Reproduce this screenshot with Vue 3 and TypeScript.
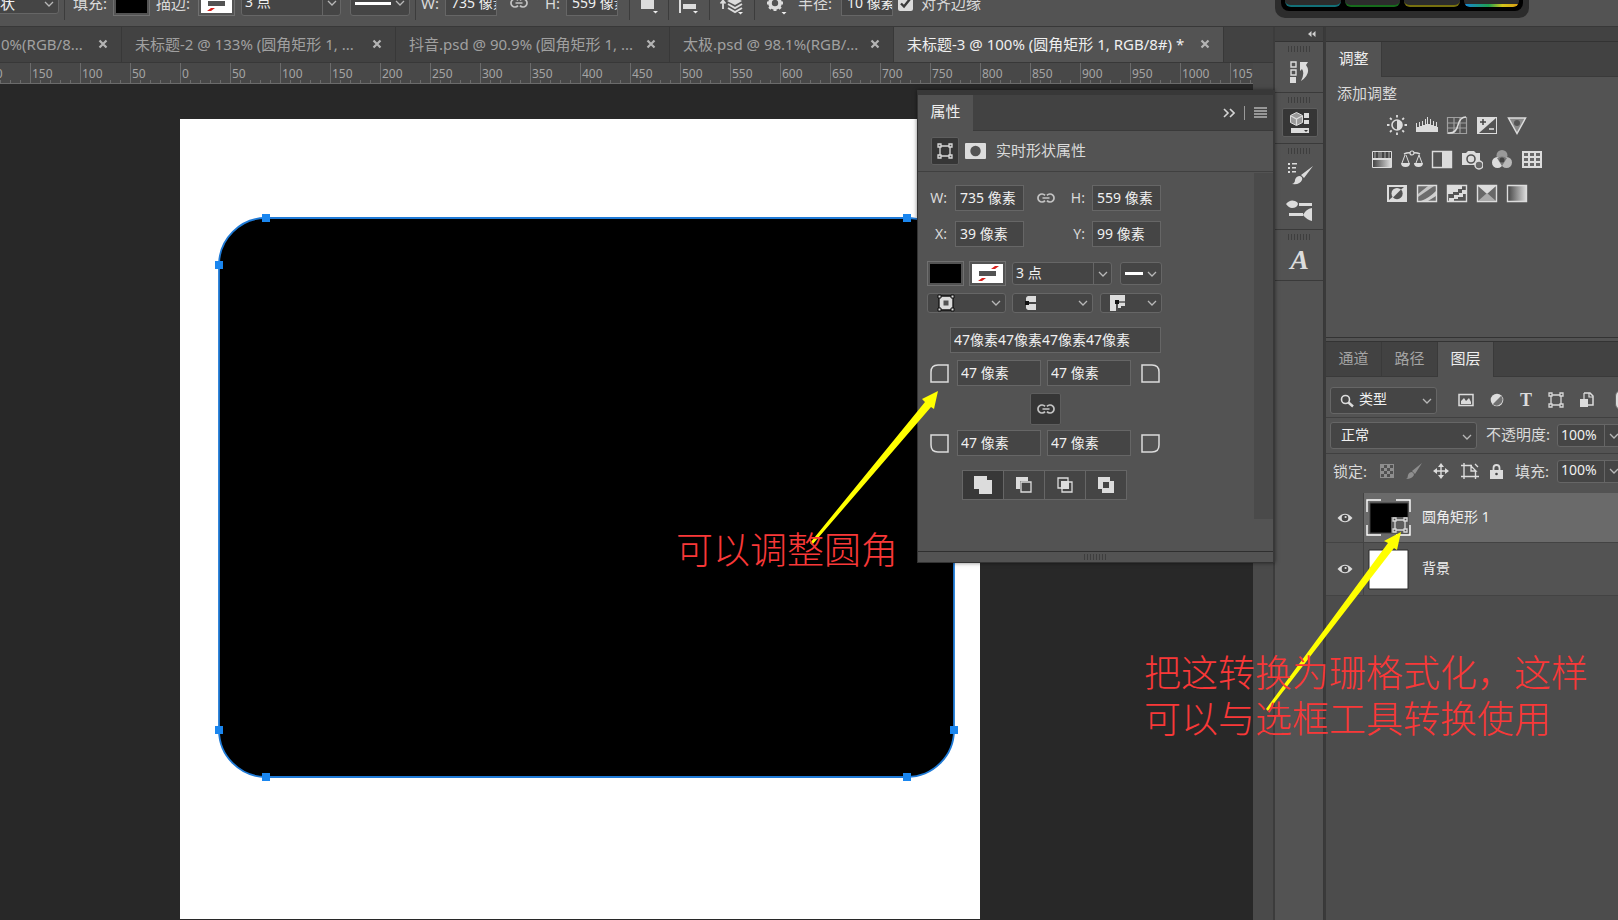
<script setup lang="ts">
import { ref } from 'vue'

interface DocTab {
  title: string
  size: string
  active?: boolean
}

const tabs: DocTab[] = [
  { title: '0%(RGB/8...', size: 'first' },
  { title: '未标题-2 @ 133% (圆角矩形 1, ...', size: 'medium' },
  { title: '抖音.psd @ 90.9% (圆角矩形 1, ...', size: 'medium' },
  { title: '太极.psd @ 98.1%(RGB/...', size: 'small' },
  { title: '未标题-3 @ 100% (圆角矩形 1, RGB/8#) *', size: 'large', active: true },
]

const rulerMarks: number[] = Array.from({ length: 26 }, (_, i) => Math.abs(i * 50 - 200))

const handles: [number, number][] = [
  [86, 99], [727, 99], [39, 146], [774, 146],
  [39, 611], [774, 611], [86, 658], [727, 658],
]

const width = ref('735 像素')
const height = ref('559 像素')
const posX = ref('39 像素')
const posY = ref('99 像素')
const stroke = ref('3 点')
const radius = ref('10 像素')
const allCorners = ref('47像素47像素47像素47像素')
const corners = ref(['47 像素', '47 像素', '47 像素', '47 像素'])
const alignEdges = ref(true)
const opacity = ref('100%')
const fill = ref('100%')
const glow = ['teal', 'green', 'olive', 'rainbow']
</script>

<template>
  <div class="app">
    <svg class="defs" aria-hidden="true">
      <symbol id="i-chev" viewBox="0 0 10 6"><path d="M1 1l4 4 4-4" fill="none" stroke="#b8b8b8" stroke-width="1.3" /></symbol>
      <symbol id="i-link" viewBox="0 0 18 12">
        <path d="M8 8.6A4 4 0 1 1 8 3.4M10 3.4a4 4 0 1 1 0 5.200M5.500 6h7" fill="none" stroke="#c4c4c4" stroke-width="1.700" />
      </symbol>
      <symbol id="i-none" viewBox="0 0 31 19">
        <path d="M0 0h31v19H0z" fill="#fff" />
        <path d="M6 17l4-3h4l-4 3zM19 5l4-3h4l-4 3z" fill="#d8201c" />
        <path d="M7 7h17v5H7z" fill="#535353" />
      </symbol>
      <symbol id="i-shape" viewBox="0 0 16 16">
        <path d="M3 3h10v10H3z" fill="none" stroke="#d8d8d8" stroke-width="1.300" />
        <g fill="#535353" stroke="#d8d8d8" stroke-width="1.300">
          <path d="M1 1h3v3H1zM12 1h3v3h-3zM1 12h3v3H1zM12 12h3v3h-3z" />
        </g>
      </symbol>
      <symbol id="i-close" viewBox="0 0 10 10"><path d="M1.500 1.500l7 7M8.500 1.500l-7 7" stroke="#b4b4b4" stroke-width="2.200" fill="none" /></symbol>
      <symbol id="i-eye" viewBox="0 0 16 10">
        <path d="M.5 5Q8-3.500 15.500 5 8 13.500.5 5z" fill="#dcdcdc" /><circle cx="8" cy="5" r="3.300" fill="#454545" /><circle cx="8.600" cy="4" r="1.100" fill="#dcdcdc" />
      </symbol>
    </svg>

    <header class="options">
      <div class="options-row">
        <div class="select opt-kind">
          <select aria-label="工具模式"><option>形状</option></select>
          <svg class="chev"><use href="#i-chev" /></svg>
        </div>
        <i class="sep sep-a"></i>
        <span class="opt-label lab-fill">填充:</span>
        <button class="swatch" aria-label="填充颜色"><span class="black"></span></button>
        <span class="opt-label lab-stroke">描边:</span>
        <button class="swatch" aria-label="描边颜色"><svg class="none"><use href="#i-none" /></svg></button>
        <div class="combo opt-combo">
          <input v-model="stroke" aria-label="描边宽度" />
          <button aria-label="描边宽度选项"><svg class="chev-in"><use href="#i-chev" /></svg></button>
        </div>
        <button class="line-select opt-line" aria-label="描边类型"><span></span><svg class="chev-in"><use href="#i-chev" /></svg></button>
        <i class="sep sep-b"></i>
        <label class="opt-label lab-w" for="o-w">W:</label>
        <input id="o-w" v-model="width" class="field opt-field" />
        <svg class="link opt-link"><use href="#i-link" /></svg>
        <label class="opt-label lab-h" for="o-h">H:</label>
        <input id="o-h" v-model="height" class="field opt-field" />
        <div class="tool-set">
          <i class="sep"></i>
          <button class="tool" aria-label="路径操作">
            <svg width="20" height="28"><path d="M2 6h13v14H2z" fill="#dcdcdc" /><path d="M14 22h5l-2.500 2.500z" fill="#eee" /></svg>
          </button>
          <i class="sep"></i>
          <button class="tool" aria-label="路径对齐方式">
            <svg width="22" height="28"><path d="M1 2h2v22H1zM5 6h8v5H5zM5 15h13v5H5z" fill="#dcdcdc" /><path d="M15 22h5l-2.500 2.500z" fill="#eee" /></svg>
          </button>
          <i class="sep"></i>
          <button class="tool" aria-label="路径排列方式">
            <svg width="26" height="28"><path d="M4 20v-8M1.500 14.500L4 11.500l2.500 3" stroke="#dcdcdc" stroke-width="1.800" fill="none" /><path d="M8 12l8-4 7 4-7 4z" fill="#dcdcdc" /><path d="M9 15l7 4 7-4M9 19l7 4 7-4" fill="none" stroke="#dcdcdc" stroke-width="2" /><path d="M19 23h5l-2.500 2.500z" fill="#eee" /></svg>
          </button>
          <i class="sep"></i>
        </div>
        <button class="gear" aria-label="设置">
          <svg width="22" height="28"><circle cx="9" cy="14" r="5" fill="none" stroke="#dcdcdc" stroke-width="3.600" /><path d="M9 6v3M9 19v3M1 14h3M14 14h3M3.300 8.300l2 2M12.700 17.700l2 2M14.700 8.300l-2 2M5.300 17.700l-2 2" stroke="#dcdcdc" stroke-width="3" /><path d="M15.500 23h5L18 25.500z" fill="#eee" /></svg>
        </button>
        <label class="opt-label lab-r" for="o-r">半径:</label>
        <input id="o-r" v-model="radius" class="field opt-field" />
        <label class="check"><input v-model="alignEdges" type="checkbox" />对齐边缘</label>
      </div>
    </header>

    <div class="widget" aria-hidden="true"><div class="widget-in"><span v-for="g in glow" :key="g" :class="g"></span></div></div>

    <div class="work">
      <main class="document">
        <nav class="tabs">
          <div v-for="t in tabs" :key="t.title" class="tab" :class="[t.size, { active: t.active }]">
            <button class="tab-title">{{ t.title }}</button>
            <button class="tab-close" aria-label="关闭"><svg width="10" height="10"><use href="#i-close" /></svg></button>
          </div>
        </nav>
        <div class="stage">
          <div class="view">
            <div class="ruler"><div class="marks"><span v-for="(m, i) in rulerMarks" :key="i">{{ m }}</span></div></div>
            <div class="canvas">
              <svg class="artboard" viewBox="0 0 800 800">
                <rect width="800" height="800" fill="#fff" />
                <rect x="39" y="99" width="735" height="559" rx="47" stroke="#1f7ad6" stroke-width="1.800" />
                <rect v-for="([x, y], i) in handles" :key="i" :x="x - 4" :y="y - 4" width="8" height="8" fill="#1a86ef" />
              </svg>
            </div>
          </div>
          <div class="gutter"></div>

          <section class="props">
            <div class="props-tabs">
              <button class="ptab">属性</button>
              <span class="fill"></span>
              <button class="plain" aria-label="折叠"><svg width="12" height="10"><path d="M1 1l4 4-4 4M7 1l4 4-4 4" fill="none" stroke="#d4d4d4" stroke-width="1.600" /></svg></button>
              <i class="bar"></i>
              <button class="plain" aria-label="面板菜单"><svg width="13" height="11"><path d="M0 1h13M0 4h13M0 7h13M0 10h13" stroke="#b4b4b4" stroke-width="1.500" /></svg></button>
            </div>
            <div class="props-head">
              <button class="mode" aria-label="形状"><svg width="16" height="16"><use href="#i-shape" /></svg></button>
              <svg width="21" height="16"><rect width="21" height="16" rx="1" fill="#dcdcdc" /><circle cx="10.500" cy="8" r="5.200" fill="#535353" /></svg>
              <span>实时形状属性</span>
            </div>
            <div class="props-body">
              <div class="props-form">
                <div class="row">
                  <label class="wl" for="p-w">W:</label><input id="p-w" v-model="width" class="field" />
                  <span class="link-cell"><svg class="link"><use href="#i-link" /></svg></span>
                  <label class="hl" for="p-h">H:</label><input id="p-h" v-model="height" class="field" />
                </div>
                <div class="row gap-m">
                  <label class="wl" for="p-x">X:</label><input id="p-x" v-model="posX" class="field" />
                  <span class="link-cell"></span>
                  <label class="hl" for="p-y">Y:</label><input id="p-y" v-model="posY" class="field" />
                </div>
                <div class="row gap-l indent">
                  <button class="swatch" aria-label="填充颜色"><span class="black"></span></button>
                  <button class="swatch second" aria-label="描边颜色"><svg class="none"><use href="#i-none" /></svg></button>
                  <div class="combo">
                    <input v-model="stroke" aria-label="描边宽度" />
                    <button aria-label="描边宽度选项"><svg class="chev-in"><use href="#i-chev" /></svg></button>
                  </div>
                  <button class="line-select" aria-label="描边类型"><span></span><svg class="chev-in"><use href="#i-chev" /></svg></button>
                </div>
                <div class="row gap-s indent drops">
                  <button class="drop d1" aria-label="描边对齐">
                    <svg width="18" height="18"><path d="M2 2h14v14H2z" fill="#dcdcdc" stroke="#111" stroke-width="1.300" /><path d="M6.500 6.500h5v5h-5z" fill="#535353" /><path d="M1 1h3v3H1zM14 1h3v3h-3zM1 14h3v3H1zM14 14h3v3h-3z" fill="#ddd" stroke="#111" /></svg>
                    <svg class="chev-in"><use href="#i-chev" /></svg>
                  </button>
                  <button class="drop d2" aria-label="描边端点">
                    <svg width="18" height="16"><path d="M7 1h8v6H8v2h7v6H7a3 3 0 0 1-2-2V3a3 3 0 0 1 2-2z" fill="#dcdcdc" /><path d="M4 6h4v4H4z" fill="#111" /></svg>
                    <svg class="chev-in"><use href="#i-chev" /></svg>
                  </button>
                  <button class="drop d3" aria-label="描边合并">
                    <svg width="17" height="16"><path d="M1 0h15v11h-4v2H9v3H1z" fill="#dcdcdc" /><path d="M6 5h4v4H6zM7.300 8h1.400v8H7.300zM9 6.500h7v1H9z" fill="#111" /></svg>
                    <svg class="chev-in"><use href="#i-chev" /></svg>
                  </button>
                </div>
                <div class="row gap-l all"><input v-model="allCorners" class="field" aria-label="角半径" /></div>
                <div class="row gap-s corner-row">
                  <svg width="19" height="19"><path d="M18 18V1H8Q1 1 1 8v10z" class="corner" /></svg>
                  <input v-model="corners[0]" class="field" aria-label="左上角半径" />
                  <input v-model="corners[1]" class="field" aria-label="右上角半径" />
                  <svg width="19" height="19"><path d="M1 18V1h10q7 0 7 7v10z" class="corner" /></svg>
                </div>
                <div class="row gap-s lock-row"><button class="lock-link" aria-label="链接角半径"><svg class="link"><use href="#i-link" /></svg></button></div>
                <div class="row gap-xs corner-row">
                  <svg width="19" height="19"><path d="M1 1h17v17H8q-7 0-7-7z" class="corner" /></svg>
                  <input v-model="corners[2]" class="field" aria-label="左下角半径" />
                  <input v-model="corners[3]" class="field" aria-label="右下角半径" />
                  <svg width="19" height="19"><path d="M1 1h17v10q0 7-7 7H1z" class="corner" /></svg>
                </div>
                <div class="row gap-l bool">
                  <button class="on" aria-label="合并形状"><svg width="18" height="18"><path d="M0 0h13v4h5v14H5v-5H0z" fill="#dcdcdc" /></svg></button>
                  <button aria-label="减去顶层"><svg width="16" height="16"><path d="M0 0h12v4H4v8H0z" fill="#dcdcdc" /><path d="M5 5h10v10H5z" class="thin" /></svg></button>
                  <button aria-label="交叉形状"><svg width="16" height="16"><path d="M1 1h10v10H1zM5 5h10v10H5z" class="thin" /><path d="M4 4h8v8H4z" fill="#dcdcdc" /></svg></button>
                  <button aria-label="排除重叠"><svg width="16" height="16"><path d="M0 0h12v4h4v12H4v-4H0zM5 5v6h6V5z" fill="#dcdcdc" fill-rule="evenodd" /></svg></button>
                </div>
              </div>
              <div class="track"></div>
            </div>
            <div class="props-foot"><i class="grip"></i></div>
          </section>
        </div>
      </main>

      <aside class="strip">
        <div class="strip-top"><svg width="8" height="6"><path d="M3.500 0v6L0 3zM7.500 0v6L4 3z" fill="#cfcfcf" /></svg></div>
        <div class="strip-group">
          <i class="grip"></i>
          <button aria-label="历史记录"><svg width="20" height="24"><path d="M1 2h5v5H1zM1 10h5v5H1z" fill="none" stroke="#dcdcdc" stroke-width="1.400" /><path d="M0 17h6v6H0z" fill="#dcdcdc" /><path d="M10 2h8l-2 3q6 8-5 16 4-8 1-12l-2 2z" fill="#dcdcdc" /></svg></button>
        </div>
        <div class="strip-group">
          <i class="grip"></i>
          <button class="on" aria-label="属性"><svg width="20" height="22"><path d="M6.500.5l6 3v7l-6 3-6-3v-7z" fill="#9a9a9a" stroke="#dcdcdc" /><path d="M1 4l5.500 3L12 4M6.500 7v6" fill="none" stroke="#dcdcdc" stroke-width="1.200" /><path d="M14 1h5v5h-5zM14 8h5v4h-5zM1 16h18v5H1z" fill="#dcdcdc" /><path d="M14 18h4l-2 2z" fill="#333" /></svg></button>
        </div>
        <div class="strip-group two">
          <i class="grip"></i>
          <button aria-label="画笔设置"><svg width="26" height="24"><path d="M1 1h2v2H1zM5 1h5v1.500H5zM1 5h2v2H1zM5 5h4v1.500H5zM1 9h2v2H1zM5 9h4v1.500H5z" fill="#dcdcdc" /><path d="M26 4l-9 12-3-3zM5 22q3-1 3-4 1-4 5-4 3 1 2 4-2 5-10 4z" fill="#dcdcdc" /></svg></button>
          <button aria-label="画笔"><svg width="27" height="22"><path d="M0 5q4-5 9-3 3 1 3 3-1 4-6 4-3 0-6-4zM13 4h13v3H13zM3 14h14v3H3zM26 9v13q-5-1-9-6 3-6 9-7z" fill="#dcdcdc" /></svg></button>
        </div>
        <div class="strip-group">
          <i class="grip"></i>
          <button class="glyph" aria-label="字形">A</button>
        </div>
      </aside>

      <aside class="side">
        <div class="side-top"></div>
        <section class="adjust">
          <div class="side-tabs"><button class="active">调整</button></div>
          <p>添加调整</p>
          <div class="adj-row">
            <svg viewBox="0 0 22 22"><circle cx="11" cy="11" r="5" fill="none" stroke="#dcdcdc" stroke-width="1.600" /><path d="M11 6a5 5 0 0 1 0 10z" fill="#dcdcdc" /><path d="M11 1v2.500M11 18.500V21M1 11h2.500M18.500 11H21M4 4l1.700 1.700M16.300 16.300L18 18M18 4l-1.700 1.700M5.700 16.300L4 18" stroke="#dcdcdc" stroke-width="1.800" /></svg>
            <svg viewBox="0 0 22 22"><path d="M0 18V9h1v4h2V8h1v4h2V7h1v4h2V5h1v5h1V3h1v7h2V5h1v6h2V7h1v5h2V8h1v5h1V8h1v10z" fill="#dcdcdc" /></svg>
            <svg viewBox="0 0 22 22"><path d="M1.500 3.500h19v16h-19zM8 3v16M14 3v16M1 9h20M1 14h20" fill="none" stroke="#a0a0a0" stroke-width="1.200" /><path d="M2 19q8 1 10-8 2-8 8-8" fill="none" stroke="#dcdcdc" stroke-width="1.500" /></svg>
            <svg viewBox="0 0 22 22"><path d="M1 3h20v17H1z" fill="#dcdcdc" /><path d="M20 4v15H3z" fill="#535353" /><path d="M4 8h6M7 5v6" stroke="#444" stroke-width="1.500" /><path d="M13 15h5" stroke="#dcdcdc" stroke-width="1.600" /></svg>
            <svg viewBox="0 0 22 22"><path d="M2.500 4h17L11 19.500z" fill="#8a8a8a" stroke="#dcdcdc" stroke-width="1.500" /><circle cx="11" cy="9" r="3" fill="#555" /></svg>
          </div>
          <div class="adj-row">
            <svg viewBox="0 0 22 22"><path d="M1.500 3.500h19v16h-19z" fill="#444" stroke="#dcdcdc" /><path d="M4 4v6M8 4v6M10 4v6M14 4v6M18 4v6" stroke="#aaa" /><path d="M2 11h19" stroke="#dcdcdc" stroke-width="2" /><path d="M2 12h18v7H2z" fill="url(#g-ramp)" /></svg>
            <svg viewBox="0 0 22 22"><path d="M3 6q4-2 8-1 4-1 8 1" fill="none" stroke="#dcdcdc" stroke-width="1.500" /><circle cx="11" cy="5" r="2" fill="#535353" stroke="#dcdcdc" stroke-width="1.200" /><path d="M4 7L1 15M5 7l3 8M18 7l-3 8M18 7l3 8" stroke="#dcdcdc" /><path d="M0 15h9q0 4-4.500 4T0 15zM13 15h9q0 4-4.500 4T13 15z" fill="#dcdcdc" /></svg>
            <svg viewBox="0 0 22 22"><path d="M1.500 3.500h19v16h-19z" fill="none" stroke="#dcdcdc" stroke-width="1.400" /><path d="M11 3h10v17H11z" fill="#dcdcdc" /></svg>
            <svg viewBox="0 0 22 22"><path d="M1 5h4l2-2h6l2 2h4v12H1z" fill="#dcdcdc" /><circle cx="10" cy="11" r="4" fill="#dcdcdc" stroke="#535353" stroke-width="1.600" /><circle cx="18" cy="17" r="4" fill="#666" stroke="#dcdcdc" stroke-width="1.500" /></svg>
            <svg viewBox="0 0 22 22"><circle cx="11" cy="7.500" r="5.500" fill="#999" /><circle cx="6.500" cy="14.500" r="5.500" fill="#dcdcdc" /><circle cx="15.500" cy="14.500" r="5.500" fill="#b8b8b8" /><path d="M6 10q5-3 10 0l-5 8z" fill="#777" /><circle cx="11" cy="12" r="2.500" fill="#444" /></svg>
            <svg viewBox="0 0 22 22"><path d="M1 3h20v17H1z" fill="#dcdcdc" /><path d="M3 5h4v3H3zM9 5h4v3H9zM15 5h4v3h-4zM3 10h4v3H3zM9 10h4v3H9zM15 10h4v3h-4zM3 15h4v3H3zM9 15h4v3H9zM15 15h4v3h-4z" fill="#666" /></svg>
          </div>
          <div class="adj-row">
            <svg viewBox="0 0 22 22"><path d="M1 3h20v17H1z" fill="#dcdcdc" /><path d="M3 5h15L3 18z" fill="#535353" /><circle cx="11" cy="11.500" r="5.500" fill="#dcdcdc" /><path d="M7 15.500a5.500 5.500 0 0 0 8-8z" fill="#535353" /></svg>
            <svg viewBox="0 0 22 22"><path d="M1.500 3.500h19v16h-19z" fill="#6c6c6c" stroke="#dcdcdc" stroke-width="1.400" /><path d="M2 12L12 4h6L2 15z" fill="#c4c4c4" /><path d="M5 19q8-3 15-10v5l-8 5z" fill="#d0d0d0" /></svg>
            <svg viewBox="0 0 22 22"><path d="M1.500 3.500h19v16h-19z" fill="#535353" stroke="#dcdcdc" stroke-width="1.400" /><path d="M2 4h14v3h-4v3H7v2H2zM20 8v4h-3v3h-5v2H8v2H3v-3h5v-3h5v-2h3V8z" fill="#dcdcdc" /></svg>
            <svg viewBox="0 0 22 22"><path d="M1.500 3.500h19v16h-19z" fill="#686868" stroke="#dcdcdc" stroke-width="1.400" /><path d="M2 4h18l-9 8z" fill="#dcdcdc" /><path d="M2 19h18l-9-8z" fill="#aaa" /></svg>
            <svg viewBox="0 0 22 22"><defs><linearGradient id="g-ramp"><stop stop-color="#444" /><stop offset="1" stop-color="#ddd" /></linearGradient></defs><path d="M1.500 3.500h19v16h-19z" fill="url(#g-ramp)" stroke="#dcdcdc" stroke-width="1.400" /></svg>
          </div>
        </section>

        <section class="layers">
          <div class="side-tabs"><button>通道</button><button>路径</button><button class="active">图层</button></div>
          <div class="filter-row">
            <div class="select kind">
              <svg class="mag" width="14" height="14"><circle cx="5.500" cy="5.500" r="4" fill="none" stroke="#dcdcdc" stroke-width="1.600" /><path d="M8.500 8.500l4.500 4" stroke="#dcdcdc" stroke-width="2.400" /></svg>
              <select aria-label="图层过滤"><option>类型</option></select>
              <svg class="chev"><use href="#i-chev" /></svg>
            </div>
            <div class="filters">
              <button aria-label="像素图层"><svg width="16" height="14"><path d="M1 1.500h14v11H1z" fill="none" stroke="#dcdcdc" stroke-width="1.500" /><path d="M3 11V8l3-3 2 3 3-3 2 4v2z" fill="#dcdcdc" /></svg></button>
              <button aria-label="调整图层"><svg width="14" height="14"><circle cx="7" cy="7" r="6.300" fill="#dcdcdc" /><path d="M2.800 11.200A6 6 0 0 0 11.200 2.800z" fill="#707070" /></svg></button>
              <button class="type" aria-label="文字图层">T</button>
              <button aria-label="形状图层"><svg width="16" height="16"><use href="#i-shape" /></svg></button>
              <button aria-label="智能对象"><svg width="14" height="16"><path d="M4 1h6l3 3v9H8" fill="none" stroke="#dcdcdc" stroke-width="1.500" /><path d="M9 1v4h4M4 1v6" fill="none" stroke="#dcdcdc" stroke-width="1.200" /><path d="M0 7h8v8H0z" fill="#dcdcdc" /></svg></button>
            </div>
            <button class="toggle" aria-label="过滤开关"></button>
          </div>
          <div class="blend-row">
            <div class="select blend">
              <select aria-label="混合模式"><option>正常</option></select>
              <svg class="chev"><use href="#i-chev" /></svg>
            </div>
            <label for="l-op">不透明度:</label>
            <div class="combo pct"><input id="l-op" v-model="opacity" /><button aria-label="不透明度选项"><svg class="chev-in"><use href="#i-chev" /></svg></button></div>
          </div>
          <div class="lock-bar">
            <span class="lock-label">锁定:</span>
            <div class="locks">
              <button aria-label="锁定透明像素"><svg width="14" height="14"><path d="M0 0h14v14H0z" fill="#8e8e8e" /><path d="M4 1h3v3H4zM10 1h3v3h-3zM1 4h3v3H1zM7 4h3v3H7zM4 7h3v3H4zM10 7h3v3h-3zM1 10h3v3H1zM7 10h3v3H7z" fill="#505050" /></svg></button>
              <button aria-label="锁定图像像素"><svg width="16" height="16"><path d="M16 0L9 11 6 8zM0 16q2-1 2-4 1-3 4-3 2 1 2 3-2 4-8 4z" fill="#8e8e8e" /></svg></button>
              <button aria-label="锁定位置"><svg width="16" height="16"><path d="M8 2v12M2 8h12" stroke="#dcdcdc" stroke-width="1.400" /><path d="M8 0l3 4H5zM8 16l3-4H5zM0 8l4-3v6zM16 8l-4-3v6z" fill="#dcdcdc" /></svg></button>
              <button aria-label="锁定画板"><svg width="18" height="16"><path d="M0 2.500h11M3 0v16M0 13.500h18M14.500 8v8" fill="none" stroke="#dcdcdc" stroke-width="1.400" /><path d="M10 3l5 5h-5zM14 1l3 3" fill="none" stroke="#dcdcdc" stroke-width="1.300" /></svg></button>
              <button aria-label="锁定全部"><svg width="13" height="15"><path d="M3.500 7V4a3 3 0 0 1 6 0v3" fill="none" stroke="#dcdcdc" stroke-width="1.800" /><path d="M0 6h13v9H0z" fill="#dcdcdc" /><circle cx="6.500" cy="10" r="1.300" fill="#444" /></svg></button>
            </div>
            <label for="l-fill">填充:</label>
            <div class="combo pct"><input id="l-fill" v-model="fill" /><button aria-label="填充选项"><svg class="chev-in"><use href="#i-chev" /></svg></button></div>
          </div>
          <ul class="layer-list">
            <li class="selected">
              <button class="eye" aria-label="可见性"><svg width="16" height="10"><use href="#i-eye" /></svg></button>
              <div class="layer">
                <svg class="thumb" width="45" height="37"><path d="M4 4h38v30H4z" fill="#000" stroke="#404040" /><path d="M25 18h17v16H25z" fill="#5d5d5d" /><svg x="26" y="18" width="16" height="16"><use href="#i-shape" /></svg><path d="M1 13V1h14M30 1h14v12M44 26v10H30M15 36H1V26" fill="none" stroke="#fff" stroke-width="1.400" /></svg>
                <span>圆角矩形 1</span>
              </div>
            </li>
            <li>
              <button class="eye" aria-label="可见性"><svg width="16" height="10"><use href="#i-eye" /></svg></button>
              <div class="layer">
                <svg class="thumb" width="45" height="41"><path d="M3 1h39v39H3z" fill="#fff" stroke="#2a2a2a" /></svg>
                <span>背景</span>
              </div>
            </li>
          </ul>
        </section>
      </aside>
    </div>

    <div class="notes">
      <svg width="960" height="760" fill="#ff0">
        <path d="M152 543L267 402l-3-3 16-8-4 18-3-2L154 545z" />
        <path d="M608 709L730 543l-4-2 17-9-4 18-3-2L610 711z" />
      </svg>
      <p class="note one">可以调整圆角</p>
      <p class="note two">把这转换为珊格式化，这样<br />可以与选框工具转换使用</p>
    </div>
  </div>
</template>

<style>
body { margin: 0; background: #535353; overflow: hidden; }
</style>

<style scoped>
* { box-sizing: border-box; }
.app {
  position: relative; display: flex; flex-direction: column; height: 100vh; overflow: hidden;
  background: #535353; color: #dadada;
  font: 14px/20px "Noto Sans", "Noto Sans CJK SC", sans-serif;
}
.defs { position: absolute; width: 0; height: 0; }
button, input, select { font: inherit; color: inherit; margin: 0; }
button { padding: 0; border: 0; background: none; display: flex; align-items: center; justify-content: center; flex: none; }
svg { display: block; flex: none; }
i { display: block; flex: none; }
.field, .combo, .select, .line-select, .drop { background: #454545; border: 1px solid #666; color: #f0f0f0; }
.field { height: 26px; width: 69px; padding: 0 4px 2px; border-radius: 0; min-width: 0; flex: none; }
.combo { display: flex; border-radius: 3px; height: 23px; width: 100px; flex: none; overflow: hidden; }
.combo input { flex: 1; min-width: 0; border: 0; background: none; padding: 0 3px 2px; }
.combo button { width: 18px; border-left: 1px solid #666; }
.chev-in { width: 10px; height: 6px; }
.select { position: relative; border-radius: 3px; flex: none; }
.select select { width: 100%; height: 100%; border: 0; background: none; appearance: none; display: block; padding-bottom: 2px; }
.chev { position: absolute; right: 4px; top: 50%; width: 10px; height: 6px; margin-top: -2px; pointer-events: none; }
.line-select { border-radius: 3px; height: 23px; width: 42px; justify-content: space-between; padding: 0 4px; }
.line-select span { width: 18px; height: 3px; background: #fff; }
.swatch { width: 37px; height: 25px; border: 1px solid #707070; }
.black, .none { width: 31px; height: 19px; }
.black { background: #000; }
.link { width: 18px; height: 12px; }

.options { height: 27px; overflow: hidden; border-bottom: 1px solid #383838; flex: none; }
.options-row { height: 46px; margin-top: -20px; display: flex; align-items: center; }
.opt-label { font-size: 15px; flex: none; white-space: nowrap; }
.opt-kind { width: 75px; height: 22px; margin-left: -16px; }
.opt-kind select { padding-left: 0; font-size: 15px; }
.sep { width: 1px; height: 34px; background: #3c3c3c; }
.sep-a { margin: 0 8px 0 5px; }
.lab-fill { width: 40px; }
.lab-stroke { width: 48px; padding-left: 6px; }
.opt-combo { height: 26px; margin-left: 6px; }
.opt-line { width: 60px; height: 26px; margin-left: 9px; }
.opt-line span { width: 36px; }
.sep-b { margin: 0 5px; }
.lab-w { width: 24px; }
.lab-h { width: 21px; }
.opt-field { width: 52px; padding: 0 0 2px 5px; }
.opt-link { margin: 0 17px 0 13px; }
.tool-set { display: flex; align-items: center; margin-left: 11px; width: 126px; justify-content: space-between; }
.gear { margin: 0 10px 0 11px; }
.lab-r { width: 43px; }
.check { display: flex; align-items: center; gap: 8px; margin-left: 5px; font-size: 15px; white-space: nowrap; }
.check input { width: 15px; height: 15px; accent-color: #dcdcdc; }

.widget { position: absolute; right: 89px; top: 0; width: 254px; height: 18px; background: #2c2c2c; border-radius: 0 0 10px 10px; padding: 0 6px 7px; }
.widget-in { height: 11px; background: #000; border-radius: 0 0 8px 8px; padding: 0 4px 4px; display: flex; gap: 4px; }
.widget-in span { flex: 1; background: #2c2c2c; border-bottom: 2px solid; border-radius: 0 0 6px 6px; }
.widget-in .teal { border-color: #137078; }
.widget-in .green { border-color: #176b1c; }
.widget-in .olive { border-color: #77700f; }
.widget-in .rainbow { border: 0; background: linear-gradient(#2c2c2c, #2c2c2c) top / 100% 4px no-repeat, linear-gradient(90deg, #1787d8, #20a050 45%, #d3c51a 70%, #d99b13); }

.work { flex: 1; min-height: 0; display: grid; grid-template-columns: minmax(0, 1fr) 49px 294px; }
.document { display: flex; flex-direction: column; min-width: 0; min-height: 0; border-right: 2px solid #3c3c3c; }
.tabs { height: 36px; display: flex; background: #424242; border-bottom: 1px solid #383838; flex: none; }
.tab { display: flex; align-items: center; padding: 0 13px 2px; border-right: 1px solid #383838; color: #a0a0a0; flex: none; font-size: 15px; }
.tab-title { flex: 1; justify-content: flex-start; white-space: nowrap; }
.first { width: 122px; padding-left: 1px; }
.medium { width: 274px; }
.small { width: 224px; }
.large { width: 330px; }
.tab.active { background: #535353; color: #efefef; }
.stage { position: relative; flex: 1; min-height: 0; display: flex; }
.view { flex: 1; min-width: 0; display: flex; flex-direction: column; }
.ruler { height: 21px; background: #484848; border-bottom: 1px solid #6b6b6b; overflow: hidden; flex: none; }
.marks { display: flex; height: 100%; margin-left: -20px; }
.marks span { width: 50px; flex: none; border-left: 1px solid #6b6b6b; padding-left: 1px; font-size: 12px; line-height: 22px; color: #a4a4a4; background: repeating-linear-gradient(90deg, transparent 0 9px, #6b6b6b 9px 10px) left bottom / 100% 3px no-repeat; }
.canvas { position: relative; flex: 1; background: #282828; overflow: hidden; }
.artboard { position: absolute; left: 180px; top: 35px; width: 800px; height: 800px; }
.gutter { width: 20px; background: #4a4a4a; }

.props { position: absolute; right: -2px; top: 27px; width: 358px; background: #535353; border-top: 5px solid #383838; border-left: 1px solid #333; border-right: 2px solid #383838; box-shadow: 0 0 4px rgba(0, 0, 0, .5); border-bottom: 1px solid #333; }
.props-tabs { height: 36px; background: #424242; border-bottom: 1px solid #3a3a3a; display: flex; align-items: center; padding-right: 6px; gap: 9px; }
.ptab { height: 36px; width: 55px; background: #535353; color: #efefef; font-size: 15px; padding-bottom: 3px; }
.fill { flex: 1; }
.bar { width: 1px; height: 14px; background: #999; }
.props-head { height: 41px; border-bottom: 1px solid #404040; display: flex; align-items: center; padding-left: 13px; gap: 6px; font-size: 15px; }
.props-head span { margin-left: 4px; padding-bottom: 2px; }
.mode { width: 28px; height: 28px; background: #363636; border: 1px solid #5e5e5e; border-radius: 2px; }
.props-body { display: flex; height: 379px; }
.props-form { flex: 1; padding-top: 13px; }
.track { width: 19px; background: #4a4a4a; margin: 1px 0 32px; }
.row { display: flex; align-items: center; }
.gap-xs { margin-top: 5px; }
.gap-s { margin-top: 7px; }
.gap-m { margin-top: 10px; }
.gap-l { margin-top: 14px; }
.indent { padding-left: 9px; }
.wl { width: 29px; margin-right: 8px; text-align: right; }
.hl { width: 17px; margin-right: 7px; text-align: right; }
.link-cell { width: 44px; display: flex; justify-content: center; }
.second { margin: 0 6px 0 5px; }
.row .line-select { margin-left: 8px; }
.drop { height: 20px; border-radius: 3px; justify-content: space-between; padding: 0 4px 0 8px; }
.d1 { width: 79px; padding-left: 9px; }
.d2 { width: 81px; margin: 0 7px 0 6px; }
.d3 { width: 62px; }
.all { padding-left: 32px; }
.all .field { width: 211px; padding: 0 3px 2px; }
.corner-row { padding-left: 12px; }
.corner-row .field { width: 84px; padding: 0 3px 2px; }
.corner-row .field:nth-child(2) { margin: 0 6px 0 8px; }
.corner-row .field:nth-child(3) { margin-right: 10px; }
.corner { fill: none; stroke: #dcdcdc; stroke-width: 1.500; }
.thin { fill: none; stroke: #dcdcdc; stroke-width: 1.300; }
.lock-row { padding-left: 112px; }
.lock-link { width: 31px; height: 32px; background: #363636; border: 1px solid #5e5e5e; border-radius: 2px; }
.bool { padding-left: 44px; }
.bool button { width: 42px; height: 30px; background: #454545; border: 1px solid #666; margin-right: -1px; }
.bool .on { background: #383838; }
.props-foot { height: 11px; border-top: 1px solid #2f2f2f; display: flex; justify-content: center; padding-top: 2px; }
.grip { width: 24px; height: 6px; background: repeating-linear-gradient(90deg, #3e3e3e 0 1px, transparent 1px 3px); }

.strip { background: #535353; display: flex; flex-direction: column; border-right: 1px solid #383838; }
.strip-top { height: 15px; background: #424242; border-bottom: 1px solid #333; display: flex; align-items: center; justify-content: flex-end; padding-right: 7px; }
.strip-group { height: 51px; border-bottom: 1px solid #3a3a3a; display: flex; flex-direction: column; align-items: center; padding: 4px 0 0 1px; }
.strip-group button { width: 36px; height: 29px; margin-top: 5px; }
.strip-group .on { background: #363636; border: 1px solid #5e5e5e; border-radius: 2px; }
.strip-group.two { height: 86px; }
.two button + button { margin-top: 7px; }
.strip-group .glyph { font: italic bold 28px/29px "Liberation Serif", serif; color: #dcdcdc; }

.side { display: flex; flex-direction: column; min-width: 0; min-height: 0; border-left: 2px solid #3a3a3a; overflow: hidden; }
.side-top { height: 15px; background: #424242; border-bottom: 1px solid #333; flex: none; }
.side-tabs { height: 35px; background: #424242; border-bottom: 1px solid #3a3a3a; display: flex; flex: none; }
.side-tabs button { width: 56px; height: 35px; padding-bottom: 3px; font-size: 15px; color: #a4a4a4; border-right: 1px solid #3a3a3a; }
.side-tabs .active { background: #535353; color: #efefef; }
.adjust { height: 296px; border-bottom: 1px solid #333; flex: none; }
.adjust p { margin: 6px 0 0 11px; font-size: 15px; }
.adj-row { display: flex; gap: 8px; justify-content: center; width: 262px; margin-top: 12px; }
.adjust p + .adj-row { margin-top: 11px; }
.adj-row svg { width: 22px; height: 22px; }
.layers { margin-top: 3px; border-top: 1px solid #333; background: #4c4c4c; flex: 1; min-width: 0; }
.filter-row, .blend-row, .lock-bar { display: flex; align-items: center; background: #535353; padding-left: 4px; font-size: 15px; white-space: nowrap; overflow: hidden; }
.filter-row { height: 41px; border-bottom: 1px solid #404040; padding-top: 6px; }
.blend-row { height: 36px; border-bottom: 1px solid #404040; }
.lock-bar { height: 39px; padding: 0 0 5px 7px; }
.kind { width: 107px; height: 27px; }
.kind select { padding-left: 28px; font-size: 14px; }
.mag { position: absolute; left: 9px; top: 6px; }
.blend { width: 147px; height: 27px; margin-right: 9px; }
.blend select { padding-left: 10px; font-size: 14px; }
.filters { display: flex; align-items: center; justify-content: space-between; width: 136px; margin-left: 21px; flex: none; }
.filters .type { font: bold 18px/20px "Liberation Serif", serif; color: #dcdcdc; }
.toggle { width: 12px; height: 20px; border-radius: 8px; border: 1px solid #666; background: #ddd; margin-left: 21px; }
.blend-row label { width: 71px; flex: none; padding-bottom: 4px; }
.lock-label { width: 47px; flex: none; }
.locks { display: flex; align-items: center; width: 123px; justify-content: space-between; margin-right: 12px; flex: none; }
.lock-bar label { width: 42px; flex: none; }
.pct { width: 66px; font-size: 14px; }
.layer-list { list-style: none; margin: 0; padding: 0; }
.layer-list li { display: flex; background: #535353; border-bottom: 1px solid #434343; height: 53px; }
.layer-list li.selected { height: 50px; }
.eye { width: 37px; }
.layer { flex: 1; border-left: 1px solid #434343; display: flex; align-items: center; gap: 11px; padding-left: 2px; color: #f0f0f0; }
.layer span { padding-bottom: 2px; }
.selected .layer { background: #6a6a6a; }

.notes { position: absolute; top: 0; right: 0; width: 960px; height: 760px; pointer-events: none; }
.note { position: absolute; margin: 0; color: #f93838; font: 300 37px/46px "Noto Sans CJK SC", sans-serif; white-space: nowrap; }
.one { left: 18px; top: 525px; }
.two { left: 486px; top: 648px; }
</style>
